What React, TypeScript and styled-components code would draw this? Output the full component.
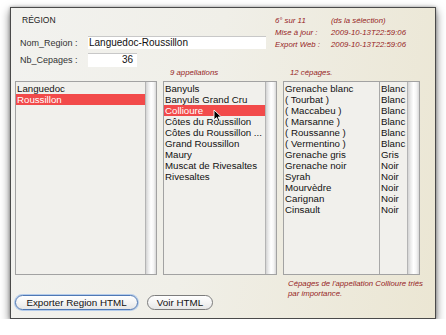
import styled, { createGlobalStyle } from 'styled-components';

const Global = createGlobalStyle`
    body {
        margin: 0;
        background: #fff;
        font-family: "Liberation Sans", Arial, sans-serif;
    }
`

const Window = styled.div`
    margin: 7px 0 0 10px;
    width: 426px;
    height: 312px;
    box-sizing: border-box;
    border: 1px solid #4a4a4a;
    background: linear-gradient(100deg, #f2f2ef 0%, #f0efe8 45%, #ebe6d3 100%);
    box-shadow: 0 4px 9px rgba(0, 0, 0, 0.55), 0 0 3px rgba(0, 0, 0, 0.3);
    display: flex;
    flex-direction: column;
`

const Header = styled.div`
    height: 60px;
    display: flex;
`

const Form = styled.div`
    width: 261px;
    padding: 6px 0 0 9px;
    box-sizing: border-box;
`

const Title = styled.div`
    margin-left: 2px;
    font-size: 8.5px;
    line-height: 12px;
    color: #222;
`

const FieldRow = styled.div<{ $top: number; $h: number }>`
    display: flex;
    align-items: center;
    height: ${p => p.$h}px;
    margin-top: ${p => p.$top}px;
`

const Label = styled.div`
    width: 68px;
    font-size: 9px;
    color: #333;
`

const Field = styled.div<{ $w: number; $right?: boolean }>`
    width: ${p => p.$w}px;
    height: 100%;
    box-sizing: border-box;
    background: #fff;
    border-top: 1px solid #c8c8c8;
    font-size: 10px;
    line-height: 12px;
    color: #111;
    padding: 0 4px 0 1px;
    text-align: ${p => (p.$right ? 'right' : 'left')};
`

const Info = styled.div`
    padding: 7px 0 0 3px;
    display: grid;
    grid-template-columns: 56px auto;
    align-content: start;
`

const RedText = styled.div`
    font-size: 7.8px;
    font-style: italic;
    line-height: 12px;
    color: #962424;
    white-space: nowrap;
`

const Columns = styled.div`
    display: grid;
    grid-template-columns: 142px 114px 137px;
    column-gap: 6px;
    padding-left: 4px;
`

const Caption = styled(RedText)`
    height: 10px;
    line-height: 10px;
    padding-left: 7px;
    margin-bottom: 3px;
`

const ListBox = styled.div`
    position: relative;
    display: flex;
    height: 194px;
    box-sizing: border-box;
    border: 1px solid #a2a2a2;
    background: #f1f0ec;
`

const Items = styled.div`
    flex: 1;
    padding-top: 1px;
`

const Row = styled.div<{ $sel?: boolean }>`
    height: 11px;
    line-height: 11px;
    padding-left: 1px;
    font-size: 9.7px;
    white-space: nowrap;
    overflow: hidden;
    color: ${p => (p.$sel ? '#fff' : '#111')};
    background: ${p => (p.$sel ? '#f24a4a' : 'transparent')};
`

const Grid = styled.div`
    flex: 1;
    display: grid;
    grid-template-columns: 95px 1fr;
    padding-top: 1px;
    background: linear-gradient(to right, transparent 95px, #a8a8a8 95px, #a8a8a8 96px, transparent 96px);
    align-content: start;
`

const Cell = styled(Row)<{ $pad?: number }>`
    padding-left: ${p => p.$pad ?? 1}px;
`

const Scroll = styled.div<{ $w: number }>`
    width: ${p => p.$w}px;
    border-left: 1px solid #b4b4b4;
    background: linear-gradient(to right, #d4d4d4, #ececec 25%, #fff 50%, #f6f6f6 75%, #d8d8d8);
`

const Cursor = styled.svg`
    position: absolute;
    left: 49px;
    top: 27px;
`

const Bottom = styled.div`
    display: grid;
    grid-template-columns: 262px 137px;
    column-gap: 6px;
    padding-left: 4px;
`

const Buttons = styled.div`
    display: flex;
    gap: 9px;
    margin-top: 20px;
`

const Button = styled.button<{ $w: number; $def?: boolean }>`
    width: ${p => p.$w}px;
    height: 15px;
    padding: 0;
    border-radius: 8px;
    border: 1px solid ${p => (p.$def ? '#4f78b4' : '#7c7c7c')};
    box-shadow: ${p => (p.$def ? '0 0 0 1px #b3cbeb' : 'none')};
    background: linear-gradient(#ffffff, #f4f4f4 50%, #e6e6e6);
    font-family: "Liberation Sans", Arial, sans-serif;
    font-size: 9.8px;
    line-height: 13px;
    color: #111;
`

const Note = styled(RedText)`
    padding-left: 5px;
    margin-top: 4px;
    line-height: 10px;
`

const regions = ['Languedoc', 'Roussillon'];
const appellations = ['Banyuls', 'Banyuls Grand Cru', 'Collioure', 'Côtes du Roussillon', 'Côtes du Roussillon ...', 'Grand Roussillon', 'Maury', 'Muscat de Rivesaltes', 'Rivesaltes'];
const cepages: [string, string][] = [
    ['Grenache blanc', 'Blanc'],
    ['( Tourbat )', 'Blanc'],
    ['( Maccabeu )', 'Blanc'],
    ['( Marsanne )', 'Blanc'],
    ['( Roussanne )', 'Blanc'],
    ['( Vermentino )', 'Blanc'],
    ['Grenache gris', 'Gris'],
    ['Grenache noir', 'Noir'],
    ['Syrah', 'Noir'],
    ['Mourvèdre', 'Noir'],
    ['Carignan', 'Noir'],
    ['Cinsault', 'Noir'],
];

export default function App() {
    return (
        <>
            <Global />
            <Window>
                <Header>
                    <Form>
                        <Title>RÉGION</Title>
                        <FieldRow $top={10} $h={13}>
                            <Label>Nom_Region :</Label>
                            <Field $w={178}>Languedoc-Roussillon</Field>
                        </FieldRow>
                        <FieldRow $top={4} $h={14}>
                            <Label>Nb_Cepages :</Label>
                            <Field $w={49} $right>36</Field>
                        </FieldRow>
                    </Form>
                    <Info>
                        <RedText>6° sur 11</RedText>
                        <RedText>(ds la sélection)</RedText>
                        <RedText>Mise à jour :</RedText>
                        <RedText>2009-10-13T22:59:06</RedText>
                        <RedText>Export Web :</RedText>
                        <RedText>2009-10-13T22:59:06</RedText>
                    </Info>
                </Header>
                <Columns>
                    <div>
                        <Caption>&nbsp;</Caption>
                        <ListBox>
                            <Items>
                                {regions.map(r => (
                                    <Row key={r} $sel={r === 'Roussillon'}>{r}</Row>
                                ))}
                            </Items>
                            <Scroll $w={10} />
                        </ListBox>
                    </div>
                    <div>
                        <Caption>9 appellations</Caption>
                        <ListBox>
                            <Items>
                                {appellations.map(a => (
                                    <Row key={a} $sel={a === 'Collioure'}>{a}</Row>
                                ))}
                            </Items>
                            <Scroll $w={10} />
                            <Cursor width="9" height="14" viewBox="0 0 9 14">
                                <path d="M1 1 L1 11 L3.5 8.6 L5.4 12.8 L7 12 L5.2 8 L8.4 8 Z" fill="#000" stroke="#fff" strokeWidth="0.9" />
                            </Cursor>
                        </ListBox>
                    </div>
                    <div>
                        <Caption>12 cépages.</Caption>
                        <ListBox>
                            <Grid>
                                {cepages.map(([n, c]) => [
                                    <Cell key={n}>{n}</Cell>,
                                    <Cell key={n + 'c'} $pad={2}>{c}</Cell>,
                                ])}
                            </Grid>
                            <Scroll $w={11} />
                        </ListBox>
                    </div>
                </Columns>
                <Bottom>
                    <Buttons>
                        <Button $w={123} $def>Exporter Region HTML</Button>
                        <Button $w={66}>Voir HTML</Button>
                    </Buttons>
                    <Note>
                        Cépages de l'appellation Collioure triés
                        <br />
                        par importance.
                    </Note>
                </Bottom>
            </Window>
        </>
    );
}
